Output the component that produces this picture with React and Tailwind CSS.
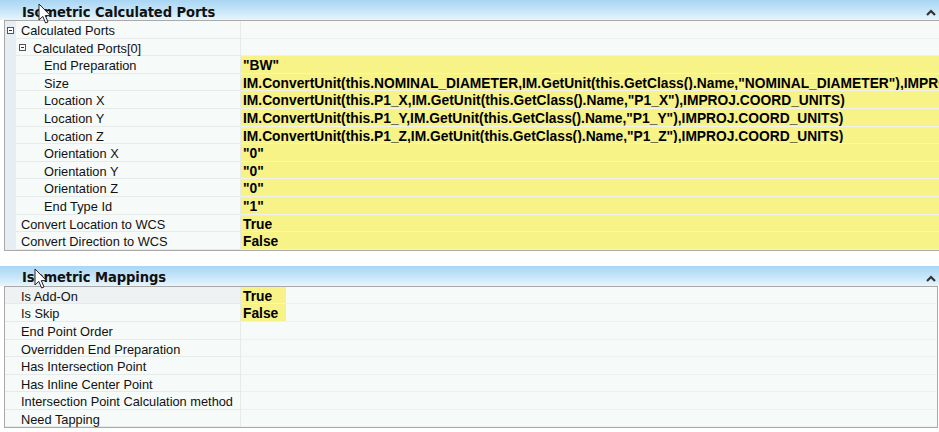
import React from "react";

const Y = "bg-[#f7f386]";

function Expander({ className = "" }) {
  return (
    <span className={`inline-flex items-center justify-center w-[7px] h-[7px] border border-[#555] bg-white ${className}`}>
      <span className="block w-[3px] h-[1px] bg-[#333]" />
    </span>
  );
}

function Cursor({ className = "" }) {
  return (
    <svg className={className} width="14" height="22" viewBox="0 0 14 22">
      <path d="M1 1 L1 17 L4.8 13.4 L7.6 20 L10 19 L7.3 12.6 L12.4 12.6 Z" fill="#fff" stroke="#222" strokeWidth="1" strokeLinejoin="round" />
    </svg>
  );
}

function Header({ title }) {
  return (
    <div className="relative h-[20px] bg-gradient-to-b from-[#a8d6f3] via-[#c4e5f8] to-[#e8f5fc] flex items-center">
      <span
        className="pl-[22px] text-[14.6px] font-bold text-[#111] tracking-[-0.1px] leading-none pt-[4px]"
        style={{ fontFamily: '"DejaVu Sans Condensed", "DejaVu Sans", sans-serif' }}
      >
        {title}
      </span>
      <svg className="absolute right-[3px] top-[9px]" width="10" height="7" viewBox="0 0 10 7">
        <path d="M1 6 L5 2 L9 6" fill="none" stroke="#333" strokeWidth="2.2" />
      </svg>
    </div>
  );
}

function Row({ level = 0, label, value, yellow, expander, gutter = true, valueW, selected }) {
  const pad = level === 0 ? "pl-[5px]" : level === 1 ? "pl-[2px]" : "pl-[28px]";
  return (
    <div className="flex h-[17.6px] leading-[17.6px]">
      {gutter && <div className="w-[11px] shrink-0 bg-[#e6edf3] relative">{expander && level === 0 && <Expander className="absolute left-[2px] top-[6px]" />}</div>}
      <div
        className={`${gutter ? "w-[225px]" : "w-[236px]"} shrink-0 border-b border-r border-[#e6ebe9] ${selected ? "bg-[#eef2f3]" : "bg-[#f6faf8]"} ${gutter ? pad : "pl-[16px]"} flex items-center whitespace-nowrap text-[#111]`}
      >
        {expander && level === 1 && <Expander className="mr-[7px] ml-[1px] mt-[2px]" />}
        <span className="pt-[3px]">{label}</span>
      </div>
      <div className="flex-1 min-w-0 flex bg-[#f6faf8] border-b border-[#eef1ee]">
        {value !== undefined && (
          <div
            className={`${yellow ? Y : ""} ${valueW ? valueW : "flex-1"} font-bold whitespace-nowrap overflow-hidden pl-[2px] pt-[2px] leading-[15.6px] text-[13.8px] text-black`}
          >
            {value}
          </div>
        )}
      </div>
    </div>
  );
}

export default function App() {
  const top = [
    { level: 0, label: "Calculated Ports", expander: true },
    { level: 1, label: "Calculated Ports[0]", expander: true },
    { level: 2, label: "End Preparation", value: '"BW"', yellow: true },
    { level: 2, label: "Size", value: 'IM.ConvertUnit(this.NOMINAL_DIAMETER,IM.GetUnit(this.GetClass().Name,"NOMINAL_DIAMETER"),IMPROJ.COORD_UNITS)', yellow: true },
    { level: 2, label: "Location X", value: 'IM.ConvertUnit(this.P1_X,IM.GetUnit(this.GetClass().Name,"P1_X"),IMPROJ.COORD_UNITS)', yellow: true },
    { level: 2, label: "Location Y", value: 'IM.ConvertUnit(this.P1_Y,IM.GetUnit(this.GetClass().Name,"P1_Y"),IMPROJ.COORD_UNITS)', yellow: true },
    { level: 2, label: "Location Z", value: 'IM.ConvertUnit(this.P1_Z,IM.GetUnit(this.GetClass().Name,"P1_Z"),IMPROJ.COORD_UNITS)', yellow: true },
    { level: 2, label: "Orientation X", value: '"0"', yellow: true },
    { level: 2, label: "Orientation Y", value: '"0"', yellow: true },
    { level: 2, label: "Orientation Z", value: '"0"', yellow: true },
    { level: 2, label: "End Type Id", value: '"1"', yellow: true },
    { level: 0, label: "Convert Location to WCS", value: "True", yellow: true },
    { level: 0, label: "Convert Direction to WCS", value: "False", yellow: true },
  ];
  const bottom = [
    { label: "Is Add-On", value: "True", yellow: true, selected: true },
    { label: "Is Skip", value: "False", yellow: true },
    { label: "End Point Order" },
    { label: "Overridden End Preparation" },
    { label: "Has Intersection Point" },
    { label: "Has Inline Center Point" },
    { label: "Intersection Point Calculation method" },
    { label: "Need Tapping" },
  ];
  return (
    <div
      className="relative w-[939px] h-[432px] overflow-hidden bg-white text-[12.8px]"
      style={{ fontFamily: '"Liberation Sans", Arial, sans-serif' }}
    >
      <Header title="Isometric Calculated Ports" />
      <div className="ml-[4px] border-l border-t border-b border-[#a9a9a9]">
        {top.map((r, i) => (
          <Row key={i} {...r} />
        ))}
      </div>
      <div className="h-[15px]" />
      <Header title="Isometric Mappings" />
      <div className="ml-[4px] mr-[1px] border border-[#a9a9a9]">
        {bottom.map((r, i) => (
          <Row key={i} {...r} gutter={false} valueW={r.value ? "w-[45px]" : undefined} />
        ))}
      </div>
      <Cursor className="absolute left-[38px] top-[3px]" />
      <Cursor className="absolute left-[34px] top-[268px]" />
    </div>
  );
}
